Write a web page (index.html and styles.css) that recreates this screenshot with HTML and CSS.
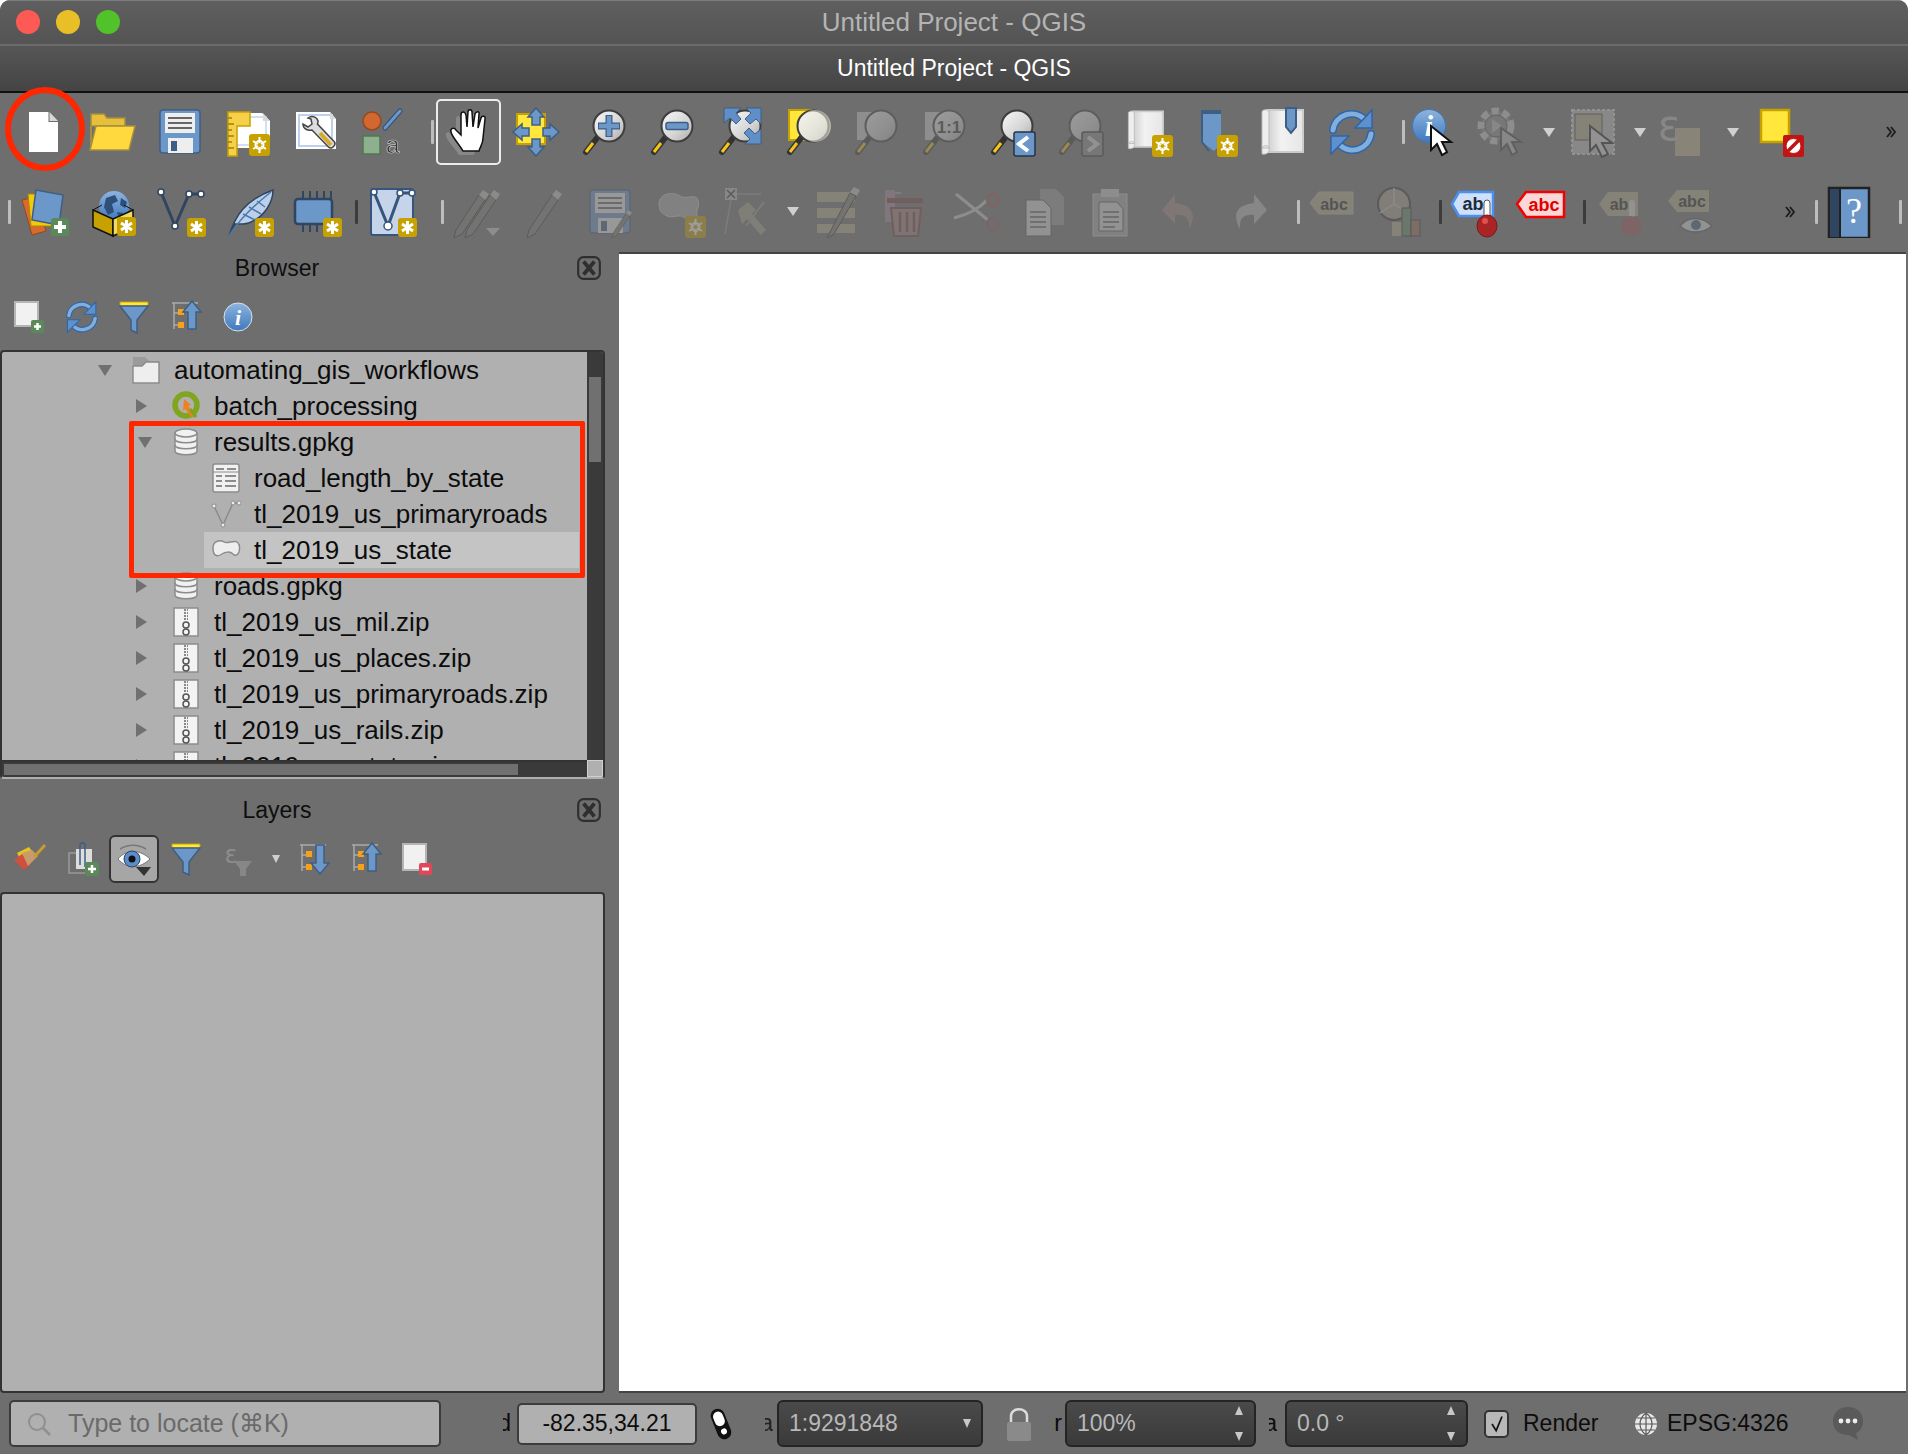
FILE: index.html
```html
<!DOCTYPE html>
<html lang="en">
<head>
<meta charset="utf-8">
<title>Untitled Project - QGIS</title>
<link rel="stylesheet" href="styles.css">
</head>
<body>
<svg class="sprite" aria-hidden="true">
<defs>
<linearGradient id="glass" x1="0" y1="0" x2="1" y2="1"><stop offset="0" stop-color="#fafafa"/><stop offset=".6" stop-color="#d4d4d4"/><stop offset="1" stop-color="#a9a9a9"/></linearGradient>
<linearGradient id="paper" x1="0" y1="0" x2="1" y2="0"><stop offset="0" stop-color="#cfcfcf"/><stop offset=".4" stop-color="#f2f2f2"/><stop offset="1" stop-color="#e6e6e6"/></linearGradient>
<linearGradient id="blue" x1="0" y1="0" x2="0" y2="1"><stop offset="0" stop-color="#8db4de"/><stop offset="1" stop-color="#3f78bd"/></linearGradient>
<g id="bgear"><rect width="21" height="22" rx="3" fill="#c6a100"/><g stroke="#fff" stroke-width="2" fill="none"><circle cx="10.5" cy="11" r="4"/><path d="M10.5 3v16M4 7l13 8M17 7L4 15"/></g><circle cx="10.5" cy="11" r="2" fill="#c6a100"/></g>
<g id="bstar"><rect width="19" height="19" rx="3" fill="#c6a100"/><path d="M9.5 3v13M4 6l11 7M15 6L4 13" stroke="#fff" stroke-width="3"/></g>
<g id="mag"><path d="M8 46L19 32" stroke="#333" stroke-width="6" stroke-linecap="round"/><path d="M8 46l7-9" stroke="#f5c518" stroke-width="3"/><circle cx="31" cy="20" r="15.5" fill="url(#glass)" stroke="#3d3d3d" stroke-width="2"/></g>
<g id="arrowsq"><path d="M0 0"/></g>
<symbol id="i-new" viewBox="0 0 52 52"><path d="M11 6h19.500v10H40v30H11z" fill="#fff"/><path d="M31.500 6L40 15h-8.500z" fill="#d8d8d8"/></symbol>
<symbol id="i-open" viewBox="0 0 52 52"><path d="M5 8h13l3 4h18v8H5z M5 8v36" fill="#e8bf3a" stroke="#a58e3e" stroke-width="1.500"/><path d="M5 20v24" stroke="#a58e3e" stroke-width="2"/><path d="M10 20h39l-6 24H4z" fill="#ffd93d" stroke="#a58e3e" stroke-width="1.500"/></symbol>
<symbol id="i-save" viewBox="0 0 52 52"><rect x="6" y="4" width="40" height="43" rx="3" fill="#6c98c9" stroke="#3f5e84" stroke-width="1.500"/><rect x="11" y="7" width="30" height="20" fill="#eee"/><path d="M14 12h24M14 17h24M14 22h24" stroke="#666" stroke-width="2"/><rect x="14" y="32" width="25" height="15" fill="#eee"/><rect x="17" y="35" width="6" height="10" fill="#3f5e84"/></symbol>
<symbol id="i-layout" viewBox="0 0 52 52"><path d="M8 7h32l8 8v27H8z" fill="#fff"/><path d="M12 11h32v28H12z" fill="none" stroke="#c4d4f2" stroke-width="1.500"/><path d="M41 7l7 8h-7z" fill="#d8d8d8"/><path d="M6 6h22v14H15v30H6z" fill="#f6cf4b" stroke="#c6a100" stroke-width="1.500"/><path d="M6 12h4M6 18h6M6 24h4M6 30h6M6 36h4M6 42h6" stroke="#a18200" stroke-width="1.500"/><use href="#bgear" transform="translate(27,28)"/></symbol>
<symbol id="i-manager" viewBox="0 0 52 52"><path d="M6 6h34l6 7v30H6z" fill="#fff"/><rect x="9" y="9" width="33" height="31" fill="#fff" stroke="#bcd0f0" stroke-width="2"/><path d="M40 6l6 7h-6z" fill="#d8d8d8"/><path d="M18 12c4-3 9-1 10 3 0 1 0 2-.5 3l17 18c2 3-3 8-6 5L22 24c-4 1-9-1-9-6l5 3 4-3-1-5z" fill="#ddd" stroke="#444" stroke-width="1.500"/><path d="M30 27l11 12" stroke="#d8a92a" stroke-width="4"/></symbol>
<symbol id="i-style" viewBox="0 0 52 52"><circle cx="14" cy="15" r="9" fill="#d2682f" stroke="#94491f" stroke-width="1.500"/><path d="M27 22L42 5" stroke="#2f4f78" stroke-width="5" stroke-linecap="round"/><path d="M27 22L42 5" stroke="#6c98c9" stroke-width="3" stroke-linecap="round"/><rect x="5" y="30" width="17" height="18" fill="#8fb08f" stroke="#4e7a4e" stroke-width="1.500"/><text x="28" y="47" class="svgt t-a">a</text></symbol>
<symbol id="i-hand" viewBox="0 0 52 52"><path d="M20 47C16 40 8 33 7 28c-1-4 3-5 5-2l5 5V11c0-4 4-4 5 0l1 10 1-15c0-3 4-3 4 0l1 15 2-13c1-3 5-3 4 0l-1 14 3-10c1-3 5-2 4 1l-2 19c0 6-3 11-4 15z" fill="#888" transform="translate(-3,2)"/><path d="M21 45C17 38 10 31 9 26c-1-4 3-5 5-2l5 5V9c0-4 4-4 5 0l1 12 1-15c0-3 4-3 4 0l1 15 2-13c1-3 5-3 4 0l-1 14 3-10c1-3 5-2 4 1l-2 19c0 6-3 9-4 13z" fill="#fff" stroke="#111" stroke-width="1.500"/></symbol>
<symbol id="i-pan" viewBox="0 0 52 52"><rect x="7" y="8" width="28" height="30" fill="#ffe83b" stroke="#c6a100" stroke-width="2"/><g fill="#6c98c9" stroke="#3f5e84" stroke-width="1.500"><path d="M26 2l8 9h-4v8h-8v-8h-4z"/><path d="M26 50l8-9h-4v-8h-8v8h-4z"/><path d="M3 26l9-8v4h7v8h-7v4z"/><path d="M49 26l-9-8v4h-7v8h7v4z"/></g></symbol>
<symbol id="i-zin" viewBox="0 0 52 52"><use href="#mag"/><path d="M31 9v22M20 20h22" stroke="#3f5e84" stroke-width="7"/><path d="M31 10v20M21 20h20" stroke="#6c98c9" stroke-width="4.500"/></symbol>
<symbol id="i-zout" viewBox="0 0 52 52"><use href="#mag"/><rect x="20" y="16.500" width="22" height="7" rx="2" fill="#6c98c9" stroke="#3f5e84" stroke-width="1.500"/></symbol>
<symbol id="i-zfull" viewBox="0 0 52 52"><use href="#mag"/><g fill="#5f8fc6" stroke="#3f5e84"><path d="M10 2h17l-5 5 5 6-5 5-6-6-6 5z"/><path d="M47 2v16l-5-5-6 5-5-5 6-6-5-5z"/><path d="M47 38H31l5-5-6-6 5-5 6 6 6-5z"/></g></symbol>
<symbol id="i-zsel" viewBox="0 0 52 52"><rect x="7" y="4" width="22" height="30" fill="#ffe83b" stroke="#c6a100" stroke-width="2"/><use href="#mag"/><circle cx="33" cy="20" r="16" fill="#f1f0e0" opacity=".55"/></symbol>
<symbol id="i-zlay" viewBox="0 0 52 52"><rect x="7" y="6" width="24" height="28" fill="#cfcfcf"/><use href="#mag"/></symbol>
<symbol id="i-z11" viewBox="0 0 52 52"><rect x="7" y="6" width="24" height="28" fill="#cfcfcf"/><use href="#mag"/><text x="31" y="27" text-anchor="middle" class="svgt t-11">1:1</text></symbol>
<symbol id="i-zlast" viewBox="0 0 52 52"><use href="#mag"/><rect x="28" y="26" width="21" height="24" rx="2" fill="#6c98c9" stroke="#24344a" stroke-width="1.500"/><path d="M42 31l-9 7 9 7" fill="none" stroke="#fff" stroke-width="4"/></symbol>
<symbol id="i-znext" viewBox="0 0 52 52"><use href="#mag"/><rect x="28" y="26" width="21" height="24" rx="2" fill="#8b8b8b" stroke="#333" stroke-width="1.500"/><path d="M34 31l9 7-9 7" fill="none" stroke="#ddd" stroke-width="4"/></symbol>
<symbol id="i-scroll" viewBox="0 0 52 52"><path d="M9 4h36v42H9z" fill="url(#paper)" stroke="#ccc" stroke-width="2"/><path d="M4 6c0-3 7-3 7 0v36H4zM4 42c2-3 6-3 7 0s-1 7-7 6z" fill="#eee" stroke="#bbb"/></symbol>
<symbol id="i-newmap" viewBox="0 0 52 52"><use href="#i-scroll" width="44" height="44" x="3" y="2"/><use href="#bgear" transform="translate(30,29)"/></symbol>
<symbol id="i-newbm" viewBox="0 0 52 52"><path d="M12 4h19v34l-7 7-12-9z" fill="#6c98c9"/><path d="M12 4h19v4H12z" fill="#3f5e84"/><path d="M12 4v32l7 9" fill="none" stroke="#3f5e84" stroke-width="2"/><use href="#bgear" transform="translate(27,29)"/></symbol>
<symbol id="i-showbm" viewBox="0 0 52 52"><path d="M9 4h36v42H9z" fill="url(#paper)" stroke="#ccc" stroke-width="2"/><path d="M4 6c0-3 7-3 7 0v36H4zM4 42c2-3 6-3 7 0s-1 7-7 6z" fill="#eee" stroke="#bbb"/><path d="M28 2h10v19l-5 6-5-6z" fill="#6c98c9" stroke="#3f5e84" stroke-width="2"/></symbol>
<symbol id="i-refresh" viewBox="0 0 52 52"><g fill="none" stroke-linecap="round"><path d="M7 24C9 9 28 2 39 14" stroke="#2e66aa" stroke-width="8"/><path d="M7 24C9 9 28 2 39 14" stroke="#82aedc" stroke-width="5"/><path d="M45 28C43 43 24 50 13 38" stroke="#2e66aa" stroke-width="8"/><path d="M45 28C43 43 24 50 13 38" stroke="#82aedc" stroke-width="5"/></g><path d="M46 4v18H29z" fill="#5d90cc" stroke="#2e66aa" stroke-width="1.500"/><path d="M5 48V30h18z" fill="#5d90cc" stroke="#2e66aa" stroke-width="1.500"/></symbol>
<symbol id="i-info" viewBox="0 0 52 52"><circle cx="24" cy="20" r="16.500" fill="url(#blue)" stroke="#3f78bd"/><text x="24" y="30" text-anchor="middle" class="svgt t-i">i</text><path d="M26 20v24l6-6 5 11 5-3-5-10h9z" fill="#fff" stroke="#111" stroke-width="2"/></symbol>
<symbol id="i-action" viewBox="0 0 52 52"><circle cx="22" cy="20" r="15" fill="#8c8c8c" stroke="#ccc" stroke-width="7" stroke-dasharray="7 4"/><circle cx="22" cy="20" r="11" fill="#8c8c8c" stroke="#555"/><path d="M18 13l10 7-10 7z" fill="#bbb"/><path d="M27 22v22l6-6 5 11 5-3-5-10h9z" fill="#bbb" stroke="#444" stroke-width="2"/></symbol>
<symbol id="i-select" viewBox="0 0 52 52"><rect x="3" y="4" width="42" height="44" fill="#bdbdbd" stroke="#ddd" stroke-dasharray="3 2" stroke-width="2"/><rect x="6" y="8" width="27" height="26" fill="#b5ab8a" stroke="#443" /><path d="M21 20v25l6-6 6 12 6-3-6-11h10z" fill="#ddd" stroke="#222" stroke-width="2"/></symbol>
<symbol id="i-eps" viewBox="0 0 52 52"><rect x="20" y="22" width="25" height="28" fill="#bdb28f"/><text x="14" y="34" text-anchor="middle" class="svgt t-eps">ε</text></symbol>
<symbol id="i-desel" viewBox="0 0 52 52"><rect x="6" y="4" width="28" height="32" fill="#ffe83b" stroke="#c6a100" stroke-width="2.500"/><rect x="28" y="29" width="21" height="22" rx="2" fill="#c31414"/><circle cx="38.500" cy="40" r="7.500" fill="#fff"/><circle cx="38.500" cy="40" r="7.500" fill="none" stroke="#c31414"/><path d="M33 45l11-11" stroke="#c31414" stroke-width="3.500"/></symbol>
<symbol id="i-layers" viewBox="0 0 52 52"><path d="M3 14l14 -3 10 34-14 4z" fill="#d8692f" stroke="#94491f"/><path d="M9 8h24v32H12z" fill="#f3c90e" stroke="#a58e00"/><path d="M17 4l27 5-4 30-27-5z" fill="#6c98c9" stroke="#3f5e84" stroke-width="1.500"/><rect x="32" y="32" width="18" height="18" rx="3" fill="#5a8a5a"/><path d="M41 35v12M35 41h12" stroke="#fff" stroke-width="4"/></symbol>
<symbol id="i-gpkg" viewBox="0 0 52 52"><circle cx="27" cy="20" r="15" fill="url(#blue)"/><path d="M19 12l9-3 3 6-6 3 2 8-6 3-4-8zM34 12l6 4-2 6-5-3zM30 26l6 1-4 7z" fill="#2f4f78"/><path d="M6 24l20 9v17L6 41z" fill="#c6a100" stroke="#111" stroke-width="1.500"/><path d="M46 24L26 33v17l20-9z" fill="#f1dc5f" stroke="#111" stroke-width="1.500"/><path d="M6 24l9-5M46 24l-9-5" stroke="#111"/><use href="#bstar" transform="translate(30,31)"/></symbol>
<symbol id="i-line" viewBox="0 0 52 52"><path d="M6 6L20 40 34 8 46 8" fill="none" stroke="#2f4560" stroke-width="3"/><g fill="#fff" stroke="#2f4560" stroke-width="1.500"><circle cx="6" cy="6" r="3"/><circle cx="20" cy="40" r="3"/><circle cx="34" cy="8" r="3"/><circle cx="46" cy="8" r="3"/></g><use href="#bstar" transform="translate(32,32)"/></symbol>
<symbol id="i-quill" viewBox="0 0 52 52"><path d="M6 50C12 30 22 14 50 4c0 12-8 26-22 32-6 3-12 2-16 2z" fill="#bcd0ea" stroke="#2f4560" stroke-width="1.500"/><path d="M6 50C16 34 30 20 48 6M20 28l12 6M26 21l12 7M34 15l8 6" fill="none" stroke="#4b79ae" stroke-width="1.500"/><use href="#bstar" transform="translate(32,32)"/></symbol>
<symbol id="i-chip" viewBox="0 0 52 52"><path d="M12 5v8M19 5v8M26 5v8M33 5v8M40 5v8M12 38v8M19 38v8M26 38v8" stroke="#2f4560" stroke-width="2"/><rect x="4" y="13" width="37" height="25" rx="3" fill="#6c98c9" stroke="#2f4560" stroke-width="2.500"/><use href="#bstar" transform="translate(32,32)"/></symbol>
<symbol id="i-vertex" viewBox="0 0 52 52"><rect x="5" y="3" width="42" height="46" rx="2" fill="#c5d4e8" stroke="#36557c" stroke-width="2"/><path d="M8 6L22 40 34 7 46 7" fill="none" stroke="#36557c" stroke-width="3"/><g fill="#fff" stroke="#36557c" stroke-width="1.500"><circle cx="8" cy="6" r="3"/><circle cx="22" cy="40" r="4"/><circle cx="34" cy="7" r="3"/><circle cx="46" cy="7" r="3"/></g><use href="#bstar" transform="translate(32,32)"/></symbol>
<symbol id="i-pencil" viewBox="0 0 52 52"><path d="M12 44l-2 8 8-4 23-34-6-5z" fill="#7f7f7a" stroke="#333"/><path d="M35 9l6 5 4-6-6-4z" fill="#c6c6c6"/></symbol>
<symbol id="i-pencils" viewBox="0 0 52 52"><use href="#i-pencil" x="-8" width="52" height="52"/><use href="#i-pencil" x="3" width="52" height="52"/><path d="M34 42h14l-7 8z" fill="#ccc"/></symbol>
<symbol id="i-savedit" viewBox="0 0 52 52"><use href="#i-save"/><use href="#i-pencil" x="22" y="22" width="30" height="30"/></symbol>
<symbol id="i-shape" viewBox="0 0 52 52"><path d="M4 18c0-12 16-12 21-8s16-3 18 4-2 9-1 14-6 9-12 4-12 1-18-2S4 24 4 18z" fill="#aaa" stroke="#ccc"/><use href="#bgear" transform="translate(30,30)"/></symbol>
<symbol id="i-cap" viewBox="0 0 52 52"><rect x="3" y="2" width="12" height="12" fill="#bbb"/><path d="M5 4l8 8M13 4l-8 8" stroke="#333" stroke-width="1.500"/><path d="M15 8h24M9 14L3 48" stroke="#999" stroke-width="1.500"/><path d="M16 24l10-8 8 8-4 4 14 16-5 5-14-16-5 5z" fill="#a7a28a"/><path d="M42 16L24 40" stroke="#999" stroke-width="2"/></symbol>
<symbol id="i-multi" viewBox="0 0 52 52"><path d="M3 6h38v10H3zM3 22h38v10H3zM3 38h38v9H3z" fill="#b5ab8a"/><path d="M14 50l-2 3 8-5 22-38-6-3z" fill="#7f7f7a" stroke="#333"/><path d="M36 6l7 4 3-6-6-3z" fill="#c6c6c6"/></symbol>
<symbol id="i-trash" viewBox="0 0 52 52"><path d="M4 6h16v2H4z" fill="#999"/><rect x="4" y="4" width="10" height="32" fill="#a89"/><rect x="6" y="12" width="36" height="5" fill="#7a4040"/><path d="M10 22h30l-3 28H13z" fill="#a38080" stroke="#7a4040" stroke-width="2"/><path d="M19 26v20M26 26v20M33 26v20" stroke="#7a4040" stroke-width="2.500"/></symbol>
<symbol id="i-scissors" viewBox="0 0 52 52"><path d="M5 8l32 26M3 32c12-3 24-8 33-18" stroke="#ccc" stroke-width="3" fill="none"/><circle cx="42" cy="38" r="6" fill="none" stroke="#a05050" stroke-width="2.500"/><circle cx="42" cy="14" r="6" fill="none" stroke="#a05050" stroke-width="2.500"/></symbol>
<symbol id="i-copy" viewBox="0 0 52 52"><path d="M22 3h16l8 8v28H22z" fill="#999"/><path d="M8 14h17l8 8v28H8z" fill="#ddd" stroke="#555"/><path d="M12 26h16M12 31h16M12 36h16M12 41h16" stroke="#555" stroke-width="1.500"/></symbol>
<symbol id="i-paste" viewBox="0 0 52 52"><rect x="8" y="8" width="34" height="42" fill="#aaa" stroke="#ccc"/><rect x="16" y="3" width="18" height="8" fill="#ccc"/><path d="M14 16h18l6 7v22H14z" fill="#ddd" stroke="#555"/><path d="M18 26h16M18 31h16M18 36h16M18 41h12" stroke="#555" stroke-width="1.500"/></symbol>
<symbol id="i-undo" viewBox="0 0 52 52"><path d="M20 8L7 24l13 14v-9c10-1 15 3 14 14 8-14 4-24-14-26z" fill="#a08a80"/></symbol>
<symbol id="i-redo" viewBox="0 0 52 52"><path d="M32 8l13 16-13 14v-9c-10-1-15 3-14 14-8-14-4-24 14-26z" fill="#bbb"/></symbol>
<symbol id="i-abc" viewBox="0 0 52 52"><path d="M14 6h34v22H14L5 17z" fill="#b5ab8a" stroke="#c2bb9e"/><text x="29" y="24" text-anchor="middle" class="svgt t-abc">abc</text></symbol>
<symbol id="i-chart" viewBox="0 0 52 52"><circle cx="20" cy="18" r="16" fill="#a5a08a" stroke="#333" stroke-width="2"/><path d="M20 18V2M20 18L6 27M20 18l14 9" stroke="#bbb" stroke-width="2"/><rect x="18" y="36" width="10" height="14" fill="#b5ab8a"/><rect x="28" y="22" width="9" height="28" fill="#5f8a6a" stroke="#333"/><rect x="37" y="34" width="9" height="16" fill="#a06d50" stroke="#333"/></symbol>
<symbol id="i-abpin" viewBox="0 0 52 52"><path d="M10 6h34v24H10L3 18z" fill="#cfe0fa" stroke="#4a90f0" stroke-width="2.500"/><text x="24" y="24" text-anchor="middle" class="svgt t-ab">ab</text><rect x="35" y="14" width="6" height="18" rx="3" fill="#fff" stroke="#555"/><ellipse cx="38" cy="40" rx="10" ry="11" fill="#a92525" stroke="#7a1a1a"/><circle cx="36" cy="35" r="3" fill="#e05050"/></symbol>
<symbol id="i-abcred" viewBox="0 0 52 52"><path d="M11 6h38v25H11L2 18z" fill="#fbd8d8" stroke="#f50000" stroke-width="2.500"/><text x="29" y="25" text-anchor="middle" class="svgt t-abcr">abc</text></symbol>
<symbol id="i-abpin2" viewBox="0 0 52 52"><path d="M14 6h30v24H14L5 18z" fill="#b5ab8a"/><text x="25" y="24" text-anchor="middle" class="svgt t-abc">ab</text><rect x="35" y="14" width="6" height="18" rx="3" fill="#ddd"/><circle cx="37" cy="40" r="10" fill="#a05050"/></symbol>
<symbol id="i-abceye" viewBox="0 0 52 52"><path d="M14 4h32v22H14L5 15z" fill="#b5ab8a"/><text x="29" y="21" text-anchor="middle" class="svgt t-abc">abc</text><path d="M17 40c8-10 22-10 32 0-10 8-24 8-32 0z" fill="#ddd" stroke="#555" stroke-width="1.500"/><circle cx="33" cy="39" r="5" fill="#3f5e84"/></symbol>
<symbol id="i-help" viewBox="0 0 52 52"><rect x="5" y="2" width="40" height="50" fill="#6c98c9" stroke="#222" stroke-width="2.500"/><rect x="5" y="2" width="11" height="50" fill="#2f4560" stroke="#222" stroke-width="2"/><text x="30" y="37" text-anchor="middle" class="svgt t-q">?</text></symbol>
<symbol id="i-chev" viewBox="0 0 12 14"><path d="M2 2l4 5-4 5M6 2l4 5-4 5" fill="none" stroke="#1c1c1c" stroke-width="1.800"/></symbol>
<symbol id="i-close" viewBox="0 0 24 24"><rect x="2" y="2" width="20" height="20" rx="5" fill="none" stroke="#2f2f2f" stroke-width="2"/><path d="M7 6l10 12M17 6L7 18" stroke="#2f2f2f" stroke-width="3.500"/></symbol>
<symbol id="s-add" viewBox="0 0 36 36"><rect x="3" y="3" width="23" height="24" fill="#f1f1f1" stroke="#b5b5b5" stroke-width="2"/><rect x="19" y="21" width="13" height="13" rx="2" fill="#5a8a5a"/><path d="M25.500 24v7M22 27.500h7" stroke="#fff" stroke-width="2.500"/></symbol>
<symbol id="s-remove" viewBox="0 0 36 36"><rect x="3" y="3" width="23" height="26" fill="#f1f1f1" stroke="#b5b5b5" stroke-width="2"/><rect x="19" y="22" width="13" height="12" rx="2" fill="#e0485a"/><path d="M22 28h7" stroke="#fff" stroke-width="3"/></symbol>
<symbol id="s-filter" viewBox="0 0 36 36"><path d="M4 3h28v4H4z" fill="#ffe83b" stroke="#c6a100"/><path d="M4 7h28L21 21v13l-6-3V21z" fill="#6c98c9" stroke="#3f5e84" stroke-width="1.500"/></symbol>
<symbol id="s-up" viewBox="0 0 36 36"><path d="M4 4h26M6 4v26M6 14h8M6 26h8" fill="none" stroke="#aaa" stroke-width="1.500"/><rect x="10" y="10" width="6" height="6" fill="#f5a21b"/><rect x="10" y="23" width="6" height="6" fill="#f5a21b"/><path d="M24 2l9 11h-5v17h-8V13h-5z" fill="#6c98c9" stroke="#3f5e84" stroke-width="1.500"/></symbol>
<symbol id="s-down" viewBox="0 0 36 36"><path d="M4 4h26M6 4v26M6 14h8M6 26h8" fill="none" stroke="#aaa" stroke-width="1.500"/><rect x="10" y="10" width="6" height="6" fill="#f5a21b"/><rect x="10" y="23" width="6" height="6" fill="#f5a21b"/><path d="M24 33l9-11h-5V4h-8v18h-5z" fill="#6c98c9" stroke="#3f5e84" stroke-width="1.500"/></symbol>
<symbol id="s-info" viewBox="0 0 36 36"><circle cx="18" cy="18" r="14" fill="url(#blue)" stroke="#d5e2f3"/><text x="18" y="26" text-anchor="middle" class="svgt t-si">i</text></symbol>
<symbol id="s-style" viewBox="0 0 36 36"><path d="M5 12l12-6 6 8-12 9z" fill="#e8c21e"/><path d="M2 19l8-6 9 10-7 6z" fill="#d05040"/><path d="M10 12l10-3 6 6-10 10z" fill="#c99b6c"/><path d="M22 16L33 4" stroke="#c99b30" stroke-width="3"/></symbol>
<symbol id="s-addg" viewBox="0 0 36 36"><rect x="5" y="12" width="20" height="20" fill="none" stroke="#999" stroke-width="1.500"/><rect x="12" y="8" width="16" height="20" fill="#ddd"/><path d="M16 24V4c0-3 5-3 5 0v22" fill="none" stroke="#3f5e84" stroke-width="1.500"/><rect x="21" y="21" width="14" height="14" rx="2" fill="#5a8a5a"/><path d="M28 24v8M24 28h8" stroke="#fff" stroke-width="2.500"/></symbol>
<symbol id="s-eye" viewBox="0 0 36 36"><path d="M2 18C10 8 24 8 34 18 24 28 10 28 2 18z" fill="#fff" stroke="#777"/><path d="M4 8c8-5 18-5 26 0" fill="none" stroke="#777" stroke-width="1.500"/><circle cx="16" cy="18" r="8" fill="#5b8ccb" stroke="#2f4560"/><circle cx="16" cy="18" r="3.500" fill="#111"/><path d="M20 26h15l-7 9z" fill="#333"/></symbol>
<symbol id="s-effilter" viewBox="0 0 36 36"><path d="M14 20h18L26 28v7h-6v-7z" fill="#bbb"/><text x="11" y="22" text-anchor="middle" class="svgt t-seps">ε</text></symbol>
<symbol id="t-folder" viewBox="0 0 30 30"><path d="M2 2h12l4 4h10v5H2z" fill="#9b9b9b"/><path d="M2 11h9l4-4h13v21H2z" fill="#eee" stroke="#8c8c8c" stroke-width="1.500"/></symbol>
<symbol id="t-q" viewBox="0 0 30 30"><circle cx="15" cy="14" r="11" fill="none" stroke="#80a51e" stroke-width="5.500"/><path d="M13 8l7 6-3 1 7 9-3 3-7-9-2 2z" fill="#f08020"/><path d="M19 18l6 8" stroke="#7ea31d" stroke-width="3"/></symbol>
<symbol id="t-db" viewBox="0 0 30 30"><path d="M4 6v18c0 5 22 5 22 0V6z" fill="#f1f1f1" stroke="#8c8c8c" stroke-width="1.500"/><ellipse cx="15" cy="6" rx="11" ry="4" fill="#f1f1f1" stroke="#8c8c8c" stroke-width="1.500"/><path d="M4 12c0 5 22 5 22 0M4 18c0 5 22 5 22 0" fill="none" stroke="#8c8c8c" stroke-width="1.500"/></symbol>
<symbol id="t-table" viewBox="0 0 30 30"><rect x="2" y="1" width="26" height="28" rx="2" fill="#f1f1f1" stroke="#8c8c8c" stroke-width="1.500"/><path d="M5 6h8M16 6h9" stroke="#8c8c8c" stroke-width="2"/><path d="M2 9h26" stroke="#8c8c8c"/><path d="M5 13h6M14 13h11M5 18h6M14 18h11M5 23h6M14 23h11" stroke="#8c8c8c" stroke-width="2"/></symbol>
<symbol id="t-line" viewBox="0 0 30 30"><path d="M3 7l9 19 10-22h6" fill="none" stroke="#8c8c8c" stroke-width="1.500"/><g fill="#eee" stroke="#8c8c8c"><circle cx="3" cy="7" r="2"/><circle cx="12" cy="26" r="2"/><circle cx="22" cy="4" r="2"/><circle cx="28" cy="4" r="2"/></g></symbol>
<symbol id="t-poly" viewBox="0 0 30 30"><path d="M2 13c0-8 8-8 11-6s10-2 13 0 3 7 2 10c-1 2-3 5-6 2s-8-2-11 0-9 4-9-6z" fill="#eee" stroke="#8c8c8c" stroke-width="1.500"/></symbol>
<symbol id="t-zip" viewBox="0 0 30 30"><rect x="3" y="1" width="24" height="28" fill="#f3f3f3" stroke="#8c8c8c" stroke-width="1.500"/><path d="M13 3h4M13 6h4M13 9h4M13 12h4" stroke="#666" stroke-width="1.500" stroke-dasharray="2 1"/><rect x="12" y="15" width="6" height="6" rx="3" fill="none" stroke="#555" stroke-width="1.500"/><rect x="12" y="22" width="6" height="6" rx="3" fill="none" stroke="#555" stroke-width="1.500"/></symbol>
</defs>
</svg>

<div class="win">
  <header class="titlebar">
    <div class="lights"><span class="light red"></span><span class="light yellow"></span><span class="light green"></span></div>
    <span>Untitled Project - QGIS</span>
  </header>
  <div class="subtitle">Untitled Project - QGIS</div>

  <div class="tools row1">
    <svg class="ic"><use href="#i-new"/></svg>
    <svg class="ic"><use href="#i-open"/></svg>
    <svg class="ic"><use href="#i-save"/></svg>
    <svg class="ic"><use href="#i-layout"/></svg>
    <svg class="ic"><use href="#i-manager"/></svg>
    <svg class="ic"><use href="#i-style"/></svg>
    <i class="sep"></i>
    <span class="handbox"><svg class="ic"><use href="#i-hand"/></svg></span>
    <svg class="ic"><use href="#i-pan"/></svg>
    <svg class="ic"><use href="#i-zin"/></svg>
    <svg class="ic"><use href="#i-zout"/></svg>
    <svg class="ic"><use href="#i-zfull"/></svg>
    <svg class="ic"><use href="#i-zsel"/></svg>
    <svg class="ic off"><use href="#i-zlay"/></svg>
    <svg class="ic off"><use href="#i-z11"/></svg>
    <svg class="ic"><use href="#i-zlast"/></svg>
    <svg class="ic off"><use href="#i-znext"/></svg>
    <svg class="ic"><use href="#i-newmap"/></svg>
    <svg class="ic"><use href="#i-newbm"/></svg>
    <svg class="ic"><use href="#i-showbm"/></svg>
    <svg class="ic"><use href="#i-refresh"/></svg>
    <i class="sep"></i>
    <svg class="ic"><use href="#i-info"/></svg>
    <svg class="ic off"><use href="#i-action"/></svg>
    <i class="drop"></i>
    <svg class="ic off"><use href="#i-select"/></svg>
    <i class="drop"></i>
    <svg class="ic off"><use href="#i-eps"/></svg>
    <i class="drop"></i>
    <svg class="ic"><use href="#i-desel"/></svg>
    <svg class="chev"><use href="#i-chev"/></svg>
  </div>

  <div class="tools row2">
    <i class="sep"></i>
    <svg class="ic"><use href="#i-layers"/></svg>
    <svg class="ic"><use href="#i-gpkg"/></svg>
    <svg class="ic"><use href="#i-line"/></svg>
    <svg class="ic"><use href="#i-quill"/></svg>
    <svg class="ic"><use href="#i-chip"/></svg>
    <i class="sep dark"></i>
    <svg class="ic"><use href="#i-vertex"/></svg>
    <i class="sep"></i>
    <svg class="ic off"><use href="#i-pencils"/></svg>
    <svg class="ic off"><use href="#i-pencil"/></svg>
    <svg class="ic off"><use href="#i-savedit"/></svg>
    <svg class="ic off"><use href="#i-shape"/></svg>
    <svg class="ic off"><use href="#i-cap"/></svg>
    <i class="drop"></i>
    <svg class="ic off"><use href="#i-multi"/></svg>
    <svg class="ic off"><use href="#i-trash"/></svg>
    <svg class="ic off"><use href="#i-scissors"/></svg>
    <svg class="ic off"><use href="#i-copy"/></svg>
    <svg class="ic off"><use href="#i-paste"/></svg>
    <svg class="ic off"><use href="#i-undo"/></svg>
    <svg class="ic off"><use href="#i-redo"/></svg>
    <i class="sep"></i>
    <svg class="ic off"><use href="#i-abc"/></svg>
    <svg class="ic off"><use href="#i-chart"/></svg>
    <i class="sep dark"></i>
    <svg class="ic"><use href="#i-abpin"/></svg>
    <svg class="ic"><use href="#i-abcred"/></svg>
    <i class="sep dark"></i>
    <svg class="ic off"><use href="#i-abpin2"/></svg>
    <svg class="ic off"><use href="#i-abceye"/></svg>
    <svg class="chev"><use href="#i-chev"/></svg>
    <i class="sep"></i>
    <svg class="ic"><use href="#i-help"/></svg>
    <i class="sep"></i>
  </div>

  <main class="main">
    <aside class="dock">
      <div class="dock-title first"><span>Browser</span><svg class="close"><use href="#i-close"/></svg></div>
      <div class="dock-tools">
        <svg class="sm"><use href="#s-add"/></svg>
        <svg class="sm"><use href="#i-refresh"/></svg>
        <svg class="sm"><use href="#s-filter"/></svg>
        <svg class="sm"><use href="#s-up"/></svg>
        <svg class="sm"><use href="#s-info"/></svg>
      </div>
      <section class="tree">
        <div class="rows">
          <div class="node l0"><i class="tw open"></i><svg class="ti"><use href="#t-folder"/></svg>automating_gis_workflows</div>
          <div class="node l1"><i class="tw"></i><svg class="ti"><use href="#t-q"/></svg>batch_processing</div>
          <div class="node l1"><i class="tw open"></i><svg class="ti"><use href="#t-db"/></svg>results.gpkg</div>
          <div class="node l2"><svg class="ti"><use href="#t-table"/></svg>road_length_by_state</div>
          <div class="node l2"><svg class="ti"><use href="#t-line"/></svg>tl_2019_us_primaryroads</div>
          <div class="node l2 selected"><svg class="ti"><use href="#t-poly"/></svg>tl_2019_us_state</div>
          <div class="node l1"><i class="tw"></i><svg class="ti"><use href="#t-db"/></svg>roads.gpkg</div>
          <div class="node l1"><i class="tw"></i><svg class="ti"><use href="#t-zip"/></svg>tl_2019_us_mil.zip</div>
          <div class="node l1"><i class="tw"></i><svg class="ti"><use href="#t-zip"/></svg>tl_2019_us_places.zip</div>
          <div class="node l1"><i class="tw"></i><svg class="ti"><use href="#t-zip"/></svg>tl_2019_us_primaryroads.zip</div>
          <div class="node l1"><i class="tw"></i><svg class="ti"><use href="#t-zip"/></svg>tl_2019_us_rails.zip</div>
          <div class="node l1"><i class="tw"></i><svg class="ti"><use href="#t-zip"/></svg>tl_2019_us_state.zip</div>
        </div>
        <div class="vscroll"><i></i></div>
        <div class="hscroll"><i></i></div>
        <div class="corner"></div>
      </section>
      <div class="dock-title second"><span>Layers</span><svg class="close"><use href="#i-close"/></svg></div>
      <div class="dock-tools">
        <svg class="sm"><use href="#s-style"/></svg>
        <svg class="sm"><use href="#s-addg"/></svg>
        <span class="pressed"><svg class="sm"><use href="#s-eye"/></svg></span>
        <svg class="sm"><use href="#s-filter"/></svg>
        <svg class="sm off"><use href="#s-effilter"/></svg>
        <i class="drop small"></i>
        <svg class="sm"><use href="#s-down"/></svg>
        <svg class="sm"><use href="#s-up"/></svg>
        <svg class="sm"><use href="#s-remove"/></svg>
      </div>
      <section class="layers"></section>
    </aside>
    <div class="map"></div>
  </main>

  <footer class="status">
    <label class="locator">
      <svg class="lens" viewBox="0 0 26 26"><circle cx="11" cy="11" r="8" fill="none" stroke="#8f8f8f" stroke-width="2"/><path d="M17 17l7 7" stroke="#8f8f8f" stroke-width="2.500"/></svg>
      <span>Type to locate (⌘K)</span>
    </label>
    <span class="cut lab-coord">d</span>
    <span class="coord">-82.35,34.21</span>
    <svg class="mouse" viewBox="0 0 30 36"><g transform="rotate(-22 15 18)"><rect x="8" y="2" width="14" height="32" rx="7" fill="#111"/><rect x="10" y="5" width="10" height="15" rx="5" fill="#fff"/><circle cx="15" cy="26" r="3" fill="#fff"/></g></svg>
    <span class="cut lab-scale">a</span>
    <span class="field combo">1:9291848<i class="down"></i></span>
    <svg class="lock" viewBox="0 0 26 34"><path d="M5 16V9c0-9 16-9 16 0v7" fill="none" stroke="#dcdcdc" stroke-width="2.500"/><rect x="1" y="15" width="24" height="19" rx="2" fill="#8a8a8a"/></svg>
    <span class="cut lab-mag">r</span>
    <span class="field spin mag">100%<span class="arrows"><i class="up"></i><i class="down"></i></span></span>
    <span class="cut lab-rot">a</span>
    <span class="field spin rot">0.0 °<span class="arrows"><i class="up"></i><i class="down"></i></span></span>
    <span class="check"><svg viewBox="0 0 24 24"><path d="M6 12l5 8L18 3" fill="none" stroke="#111" stroke-width="2"/></svg></span>
    <span class="render">Render</span>
    <svg class="globe" viewBox="0 0 26 26"><circle cx="13" cy="13" r="11" fill="#e8e8e8"/><path d="M13 2v22M2 13h22M4 7h18M4 19h18M13 2c-8 6-8 16 0 22M13 2c8 6 8 16 0 22" fill="none" stroke="#5a5a5a" stroke-width="1.200"/></svg>
    <span class="epsg">EPSG:4326</span>
    <svg class="msg" viewBox="0 0 34 38"><path d="M17 2c9 0 15 6 15 14 0 6-3 10-7 12l2 7-9-5C7 30 2 24 2 16 2 8 8 2 17 2z" fill="#5a5a5a"/><circle cx="10" cy="16" r="2.400" fill="#eee"/><circle cx="17" cy="16" r="2.400" fill="#eee"/><circle cx="24" cy="16" r="2.400" fill="#eee"/></svg>
  </footer>

  <svg class="circle-mark" viewBox="0 0 82 86"><ellipse cx="41" cy="43" rx="37" ry="39" fill="none" stroke="#ff2600" stroke-width="6"/></svg>
  <div class="rect-mark"></div>
</div>
</body>
</html>
```

FILE: styles.css
```css
* { box-sizing: border-box; }
html, body { margin: 0; padding: 0; background: #fff; }
body { font-family: "Liberation Sans", Arial, sans-serif; }
.sprite { position: absolute; width: 0; height: 0; }

.win {
  position: relative;
  width: 1908px;
  height: 1454px;
  display: flex;
  flex-direction: column;
  background: #6e6e6e;
  border-radius: 10px 10px 0 0;
  overflow: hidden;
}

.titlebar {
  height: 46px;
  flex: none;
  position: relative;
  display: flex;
  align-items: center;
  justify-content: center;
  background: linear-gradient(#5e5f5e, #535453);
  border-top: 1px solid #7c7c7c;
  border-bottom: 2px solid #6c6c6c;
  color: #b4b4b4;
  font-size: 26px;
}
.lights { position: absolute; left: 16px; top: 9px; display: flex; gap: 16px; }
.light { width: 24px; height: 24px; border-radius: 50%; }
.red { background: #fd5a56; }
.yellow { background: #e8bf27; }
.green { background: #52c22a; }

.subtitle {
  height: 47px;
  flex: none;
  display: flex;
  align-items: center;
  justify-content: center;
  background: linear-gradient(#555655, #434443);
  border-bottom: 2px solid #111;
  color: #fff;
  font-size: 23px;
}

.tools {
  display: grid;
  align-items: center;
  justify-items: center;
  flex: none;
}
.row1 {
  height: 78px;
  padding: 0 0 0 10px;
  grid-template-columns: repeat(6, 68px) 16px repeat(14, 68px) 19px 52px 86px 12px 79px 12px 70px 34px 62px 85px;
}
.row2 {
  height: 81px;
  grid-template-columns: 11px repeat(5, 68px) 7px 68px 18px 68px 62px 72px 70px 64px 26px 68px 66px 74px 60px 74px 66px 68px 18px 62px 76px 4px 66px 66px 12px 68px 70px 72px 22px 64px 20px;
}
.ic { width: 52px; height: 52px; display: block; flex: none; }
.off { opacity: .33; }
.sep { display: block; width: 3px; height: 24px; background: #bdbdbd; border-radius: 1px; justify-self: end; }
.sep.dark { background: #3c3c3c; }
.drop {
  display: block;
  width: 0;
  height: 0;
  border-left: 6px solid transparent;
  border-right: 6px solid transparent;
  border-top: 9px solid #cfcfcf;
}
.drop.small { border-left-width: 4px; border-right-width: 4px; border-top-width: 8px; flex: none; }
.chev { width: 12px; height: 14px; justify-self: end; }
.handbox {
  width: 65px;
  height: 66px;
  display: flex;
  align-items: center;
  justify-content: center;
  border: 2px solid #ececec;
  border-radius: 5px;
}

.svgt { font-family: "Liberation Sans", Arial, sans-serif; }
.t-a { font-size: 24px; fill: #222; stroke: #ddd; stroke-width: .6px; }
.t-11 { font-size: 17px; font-weight: bold; fill: #333; }
.t-i { font-size: 30px; font-family: "Liberation Serif", serif; font-style: italic; font-weight: bold; fill: #fff; }
.t-si { font-size: 22px; font-family: "Liberation Serif", serif; font-style: italic; font-weight: bold; fill: #fff; }
.t-eps { font-size: 42px; fill: #bbb; font-family: "DejaVu Sans", sans-serif; }
.t-seps { font-size: 24px; fill: #ccc; font-family: "DejaVu Sans", sans-serif; }
.t-abc { font-size: 16px; font-weight: bold; fill: #222; }
.t-ab { font-size: 18px; font-weight: bold; fill: #1d2a3a; }
.t-abcr { font-size: 18px; font-weight: bold; fill: #e00000; }
.t-q { font-size: 36px; fill: #fff; font-family: "Liberation Serif", serif; }

.main { flex: 1; min-height: 0; display: flex; }
.dock { width: 605px; flex: none; display: flex; flex-direction: column; }
.dock-title {
  height: 32px;
  flex: none;
  display: grid;
  grid-template-columns: 554px 1fr;
  align-items: center;
  justify-items: center;
  font-size: 23px;
  color: #0e0e0e;
}
.dock-title.second { margin-top: 15px; }
.close { width: 26px; height: 26px; justify-self: end; margin-right: 3px; }
.dock-tools {
  height: 66px;
  flex: none;
  display: flex;
  align-items: center;
  gap: 16px;
  padding-left: 12px;
}
.sm { width: 36px; height: 36px; display: block; flex: none; }
.pressed {
  width: 36px;
  height: 36px;
  display: flex;
  align-items: center;
  justify-content: center;
  position: relative;
  flex: none;
}
.pressed::before {
  content: "";
  position: absolute;
  inset: -6px -7px;
  background: #a6a6a6;
  border: 2px solid #333;
  border-radius: 6px;
}
.pressed .sm { position: relative; }

.tree {
  height: 429px;
  flex: none;
  display: grid;
  grid-template-columns: 1fr 16px;
  grid-template-rows: 1fr 17px;
  background: #b0b0b0;
  border: 2px solid #333;
  border-bottom-color: #b0b0b0;
  border-radius: 4px;
  overflow: hidden;
}
.rows { overflow: hidden; min-height: 0; }
.node {
  height: 36px;
  display: flex;
  align-items: center;
  font-size: 26px;
  color: #0c0c0c;
  white-space: nowrap;
}
.l0 { padding-left: 94px; }
.l1 { padding-left: 134px; }
.l2 { padding-left: 209px; }
.tw {
  width: 16px;
  flex: none;
  height: 0;
  border-left: 11px solid #707070;
  border-top: 7px solid transparent;
  border-bottom: 7px solid transparent;
  margin-right: 19px;
}
.tw.open {
  border-left: 7px solid transparent;
  border-right: 7px solid transparent;
  border-top: 11px solid #707070;
  border-bottom: 0;
  width: 14px;
  margin: 0 19px 0 2px;
}
.ti { width: 30px; height: 30px; flex: none; margin-right: 13px; }
.selected { margin-left: 202px; padding-left: 7px; background: #c4c4c4; margin-right: 8px; }
.vscroll { background: #3a3a3a; padding: 25px 2px 0; grid-row: 1 / 3; grid-column: 2; height: 408px; }
.vscroll i { display: block; height: 85px; background: #707070; }
.hscroll { background: #3a3a3a; padding: 2px 0 2px 2px; grid-row: 2; grid-column: 1; border-top: 2px solid #333; }
.hscroll i { display: block; width: 514px; height: 100%; background: #707070; }
.corner { background: #b0b0b0; grid-row: 2; grid-column: 2; border: 1px solid #d0d0d0; }

.layers {
  flex: 1;
  background: #b0b0b0;
  border: 2px solid #333;
  border-radius: 4px;
}

.map {
  margin-left: 14px;
  width: 1287px;
  background: #fff;
  border-top: 2px solid #444;
  border-bottom: 2px solid #444;
}

.status {
  height: 61px;
  flex: none;
  display: flex;
  align-items: center;
  font-size: 23px;
  color: #0c0c0c;
  white-space: nowrap;
}
.locator {
  width: 432px;
  height: 47px;
  margin-left: 9px;
  display: flex;
  align-items: center;
  gap: 16px;
  padding-left: 15px;
  background: #b0b0b0;
  border: 2px solid #3c3c3c;
  border-radius: 5px;
  color: #6a6a6a;
  font-size: 25px;
}
.lens { width: 26px; height: 26px; flex: none; }
.cut { width: 8px; overflow: hidden; display: flex; justify-content: flex-end; flex: none; }
.lab-coord { margin-left: 62px; }
.coord {
  width: 180px;
  height: 42px;
  margin-left: 6px;
  display: flex;
  align-items: center;
  justify-content: center;
  background: #b0b0b0;
  border: 2px solid #3c3c3c;
  border-radius: 5px;
  color: #0c0c0c;
  font-size: 23px;
}
.mouse { width: 30px; height: 36px; margin-left: 9px; flex: none; }
.lab-scale { margin-left: 29px; color: #222; }
.field {
  position: relative;
  height: 47px;
  display: flex;
  align-items: center;
  justify-content: space-between;
  padding: 0 10px;
  background: linear-gradient(#4a4a4a, #3a3a3a);
  border: 2px solid #242424;
  border-radius: 6px;
  color: #b8b8b8;
  font-size: 23px;
  flex: none;
}
.combo { width: 206px; margin-left: 4px; }
.lock { width: 26px; height: 34px; margin-left: 23px; flex: none; }
.lab-mag { margin-left: 22px; }
.mag { width: 191px; margin-left: 3px; }
.lab-rot { margin-left: 13px; }
.rot { width: 183px; margin-left: 8px; }
.arrows { display: flex; flex-direction: column; gap: 17px; margin-right: 1px; }
.up, .down { display: block; width: 0; height: 0; border-left: 4px solid transparent; border-right: 4px solid transparent; }
.up { border-bottom: 9px solid #c8c8c8; }
.down { border-top: 9px solid #c8c8c8; }
.check {
  width: 25px;
  height: 28px;
  margin-left: 16px;
  display: flex;
  align-items: center;
  justify-content: center;
  background: #b8b8b8;
  border: 2px solid #333;
  border-radius: 5px;
  flex: none;
}
.check svg { width: 20px; height: 24px; }
.render { margin-left: 14px; width: 102px; }
.globe { width: 26px; height: 26px; margin-left: 8px; flex: none; }
.epsg { margin-left: 8px; width: 120px; }
.msg { width: 34px; height: 38px; margin-left: 44px; flex: none; }

.circle-mark { position: absolute; left: 4px; top: 86px; width: 82px; height: 86px; }
.rect-mark {
  position: absolute;
  left: 129px;
  top: 421px;
  width: 456px;
  height: 157px;
  border: 5px solid #ff2600;
  border-radius: 2px;
}
```
